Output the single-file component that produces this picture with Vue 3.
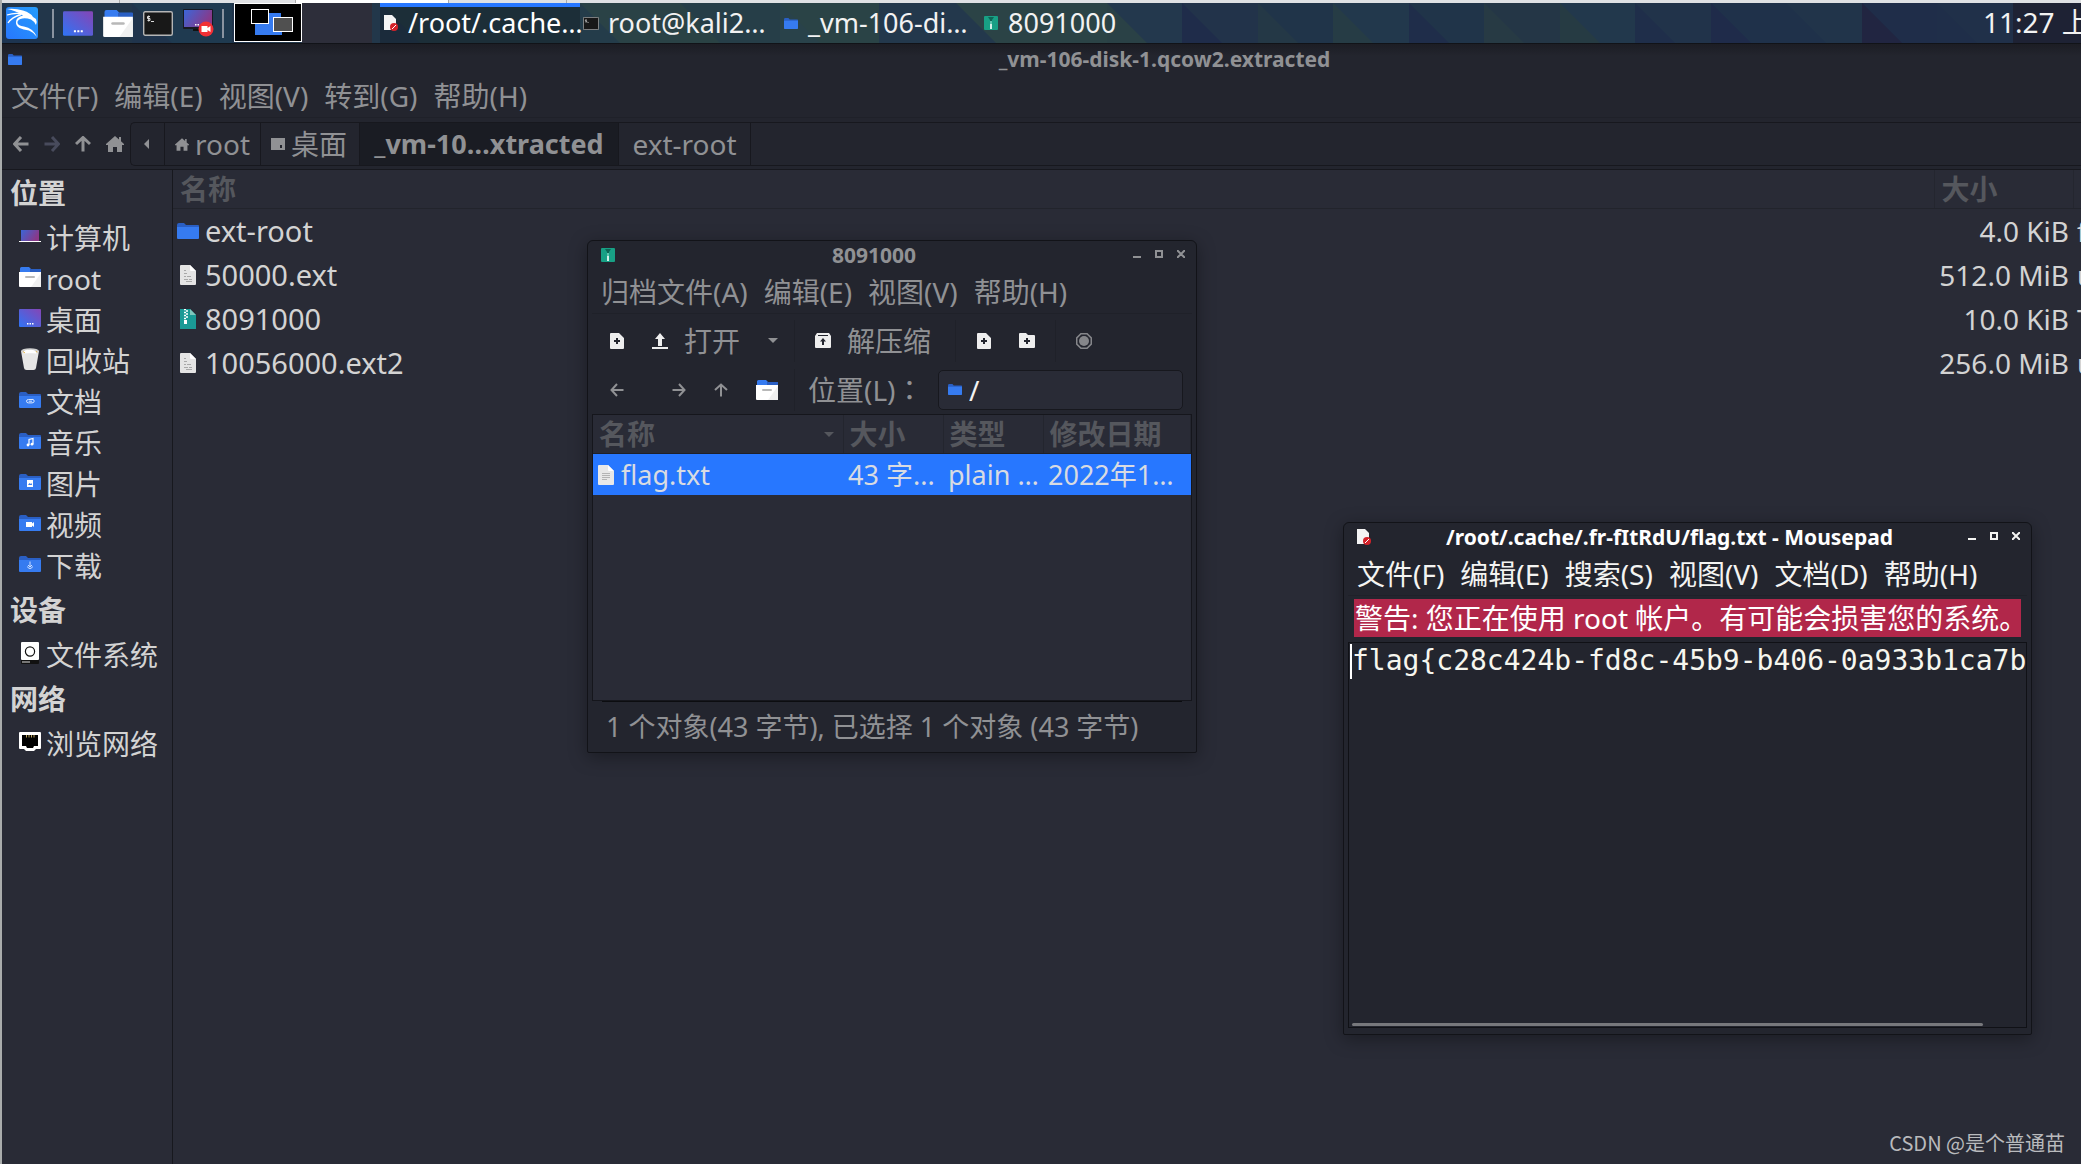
<script setup>
const tasks = [
  { icon: 'i-note-locked', w: 14, h: 16, label: '/root/.cache…', active: true },
  { icon: 'i-term', w: 16, h: 13, label: 'root@kali2…' },
  { icon: 'i-folder', w: 14, h: 11, label: '_vm-106-di…' },
  { icon: 'i-archive', w: 14, h: 14, label: '8091000' },
]

const menus = ['文件(F)', '编辑(E)', '视图(V)', '转到(G)', '帮助(H)']
const archiveMenus = ['归档文件(A)', '编辑(E)', '视图(V)', '帮助(H)']
const padMenus = ['文件(F)', '编辑(E)', '搜索(S)', '视图(V)', '文档(D)', '帮助(H)']

const places = [
  {
    title: '位置',
    items: [
      { icon: 'i-laptop', label: '计算机' },
      { icon: 'i-home-folder', label: 'root' },
      { icon: 'i-desktop', label: '桌面' },
      { icon: 'i-trash', label: '回收站' },
      { icon: 'i-f-doc', label: '文档' },
      { icon: 'i-f-music', label: '音乐' },
      { icon: 'i-f-pic', label: '图片' },
      { icon: 'i-f-video', label: '视频' },
      { icon: 'i-f-down', label: '下载' },
    ],
  },
  { title: '设备', items: [{ icon: 'i-disk', label: '文件系统' }] },
  { title: '网络', items: [{ icon: 'i-net', label: '浏览网络' }] },
]

const files = [
  { icon: 'i-folder', name: 'ext-root', size: '4.0 KiB', type: 'f' },
  { icon: 'i-bin', name: '50000.ext', size: '512.0 MiB', type: 'u' },
  { icon: 'i-zip', name: '8091000', size: '10.0 KiB', type: 'T' },
  { icon: 'i-bin', name: '10056000.ext2', size: '256.0 MiB', type: 'u' },
]

const facets = [
  { x: 2, w: 130, a: '#1d3450', b: '#22364a' },
  { x: 132, w: 100, a: '#20344c', b: '#1f3a50' },
  { x: 232, w: 148, a: '#1e3249', b: '#22374a' },
  { x: 380, w: 200, a: '#1b2b3b', b: '#1c2e38' },
  { x: 580, w: 100, a: '#243c4a', b: '#2a4246' },
  { x: 680, w: 100, a: '#2a4244', b: '#263e48' },
  { x: 780, w: 99, a: '#29424a', b: '#2a4346' },
  { x: 879, w: 77, a: '#23384c', b: '#23384c' },
  { x: 956, w: 151, a: '#23384c', b: '#2b4346' },
  { x: 1107, w: 75, a: '#2a4146', b: '#23384d' },
  { x: 1182, w: 76, a: '#1f2c4a', b: '#22334a' },
  { x: 1258, w: 75, a: '#243846', b: '#203449' },
  { x: 1333, w: 76, a: '#263c45', b: '#22384c' },
  { x: 1409, w: 75, a: '#1f2d4a', b: '#203449' },
  { x: 1484, w: 76, a: '#273a44', b: '#243646' },
  { x: 1560, w: 75, a: '#263b43', b: '#22384c' },
  { x: 1635, w: 76, a: '#1f2e4a', b: '#21334a' },
  { x: 1711, w: 75, a: '#1f2b4a', b: '#1f314a' },
  { x: 1786, w: 76, a: '#1f314a', b: '#21344a' },
  { x: 1862, w: 75, a: '#212541', b: '#1f2d49' },
  { x: 1937, w: 76, a: '#1f2e49', b: '#203049' },
  { x: 2013, w: 80, a: '#1e2234', b: '#1e2234' },
]

const flag = 'flag{c28c424b-fd8c-45b9-b406-0a933b1ca7b'
</script>

<template>
  <svg class="defs" aria-hidden="true">
    <defs>
      <linearGradient id="g-screen" x1="0" y1="1" x2="1" y2="0">
        <stop offset="0" stop-color="#2f74f5" /><stop offset="1" stop-color="#8645b5" />
      </linearGradient>
      <linearGradient id="g-laptop" x1="0" y1="0" x2="1" y2="0.4">
        <stop offset="0" stop-color="#3b66d8" /><stop offset="1" stop-color="#8a3888" />
      </linearGradient>
      <linearGradient id="g-kali" x1="0" y1="1" x2="1" y2="0">
        <stop offset="0" stop-color="#2777ff" /><stop offset="1" stop-color="#259cfb" />
      </linearGradient>
    </defs>
    <symbol id="i-folder" viewBox="0 0 22 16" preserveAspectRatio="none">
      <path d="M0 2q0-2 2-2h5l2 2h12q1 0 1 1v4H0z" fill="#2a5fc4" />
      <path d="M0 4h22v11q0 1-1 1H1q-1 0-1-1z" fill="#367bf0" />
    </symbol>
    <symbol id="i-home-folder" viewBox="0 0 22 20">
      <path d="M1 1.500q0-1.500 1.500-1.500H10l2 2h9q1 0 1 1v4H1z" fill="#367bf0" />
      <path d="M11 2h11v4H11z" fill="#2a5fc4" />
      <path d="M0 5h22v14q0 1-1 1H1q-1 0-1-1z" fill="#fff" />
      <path d="M22 6v14H12z" fill="#f0f0f0" />
      <rect x="6" y="9" width="10" height="2" rx="1" fill="#b8b8b8" />
    </symbol>
    <symbol id="i-desktop" viewBox="0 0 22 18">
      <rect width="22" height="18" rx="1" fill="url(#g-screen)" />
      <path d="M8 14h1.500v1.500H8zM10.500 14H12v1.500h-1.500zM13 14h1.500v1.500H13z" fill="#fff" />
    </symbol>
    <symbol id="i-laptop" viewBox="0 0 22 12">
      <rect x="2" width="18" height="11" fill="url(#g-laptop)" />
      <rect y="11" width="22" height="1" fill="#fff" />
    </symbol>
    <symbol id="i-trash" viewBox="0 0 22 22">
      <path d="M2 3l3 17q.3 2 2.500 2h7q2.200 0 2.500-2l3-17z" fill="#e6e6e6" />
      <ellipse cx="11" cy="3" rx="9" ry="2.800" fill="#d0d0d0" />
      <path d="M4 4q3-3 6-2 4-1 8 2l-1 1.500H5z" fill="#fff" />
      <path d="M4 3.500l2 1.500M17 3l1 1.500" stroke="#e3b64c" />
    </symbol>
    <symbol id="i-f-doc" viewBox="0 0 22 16">
      <use href="#i-folder" width="22" height="16" />
      <path d="M14 7.500H9.500q-2 0-2 1.700t2 1.700h3.500q2.200 0 2.200-1.800T13 7.300M13 9.200H9.700" stroke="#dbe8ff" fill="none" />
    </symbol>
    <symbol id="i-f-music" viewBox="0 0 22 16">
      <use href="#i-folder" width="22" height="16" />
      <path d="M10 12V6.500l4-1V11" stroke="#fff" fill="none" stroke-width="1.200" />
      <circle cx="9" cy="12" r="1.400" fill="#fff" /><circle cx="13" cy="11.200" r="1.400" fill="#fff" />
    </symbol>
    <symbol id="i-f-pic" viewBox="0 0 22 16">
      <use href="#i-folder" width="22" height="16" />
      <rect x="8" y="6" width="6" height="7" fill="#fff" />
      <path d="M9 11l1.500-2 1 1 .8-1 .9 2z" fill="#367bf0" />
    </symbol>
    <symbol id="i-f-video" viewBox="0 0 22 16">
      <use href="#i-folder" width="22" height="16" />
      <path d="M7 7h6v1.500l2-1.500v5l-2-1.500V12H7z" fill="#fff" />
    </symbol>
    <symbol id="i-f-down" viewBox="0 0 22 16">
      <use href="#i-folder" width="22" height="16" />
      <path d="M11 5.500v5M9 9l2 2 2-2M8.500 10.500q.5 2 2.500 2t2.500-2" stroke="#cfe0ff" fill="none" />
    </symbol>
    <symbol id="i-disk" viewBox="0 0 22 22">
      <rect x="2" width="18" height="22" rx="1" fill="#111" />
      <rect x="2" width="18" height="18" rx="1" fill="#fff" />
      <circle cx="11" cy="9.500" r="4.600" stroke="#111" stroke-width="1.200" fill="#fff" />
      <path d="M3 20h8" stroke="#ddd" />
    </symbol>
    <symbol id="i-net" viewBox="0 0 22 20">
      <path d="M1 0h20q1 0 1 1v15q0 1-1 1h-4l-2 2H7l-2-2H1q-1 0-1-1V1q0-1 1-1z" fill="#fff" />
      <path d="M3 3h16v11h-4l-1 2H8l-1-2H3z" fill="#000" />
      <path d="M7.500 3v2.500M10 3v2.500M12.500 3v2.500M15 3v2.500" stroke="#b9a15a" />
    </symbol>
    <symbol id="i-bin" viewBox="0 0 16 20">
      <path d="M1 0h9l6 6v13q0 1-1 1H1q-1 0-1-1V1q0-1 1-1z" fill="#e4e4e4" />
      <path d="M10 0l6 6h-5q-1 0-1-1z" fill="#fff" />
      <path d="M4 5.500h2M4 8.500h3M4 11.500h2M7 11.500h4M4 14.500h4M9 14.500h3M6 16.500h6" stroke="#a8a8a8" stroke-width="1" />
    </symbol>
    <symbol id="i-text" viewBox="0 0 16 20">
      <path d="M1 0h9l6 6v13q0 1-1 1H1q-1 0-1-1V1q0-1 1-1z" fill="#e8e8e8" />
      <path d="M10 0l6 6h-5q-1 0-1-1z" fill="#fff" />
      <path d="M4 8.500h8M4 10.500h8M4 12.500h8M4 14.500h5" stroke="#b4b4b4" />
    </symbol>
    <symbol id="i-zip" viewBox="0 0 16 20">
      <path d="M0 0h10l6 6v14H0z" fill="#1a9a96" />
      <path d="M10 0l6 6h-6z" fill="#7fc7bd" />
      <path d="M4 .5h2M6 2h2M4 3.500h2M6 5h2M4 6.500h2M6 8h2M4 9.500h2" stroke="#fff" stroke-width="1.500" />
      <rect x="4" y="11" width="3" height="4" fill="#fff" />
    </symbol>
    <symbol id="i-archive" viewBox="0 0 14 14">
      <rect width="14" height="14" rx="1" fill="#18a085" />
      <path d="M4 1h6L8 4v2H6V4z" fill="#0d6656" />
      <rect x="6" y="5" width="2" height="3" fill="#5fc4ae" />
      <rect x="6" y="8" width="2" height="5" fill="#d3efe8" />
    </symbol>
    <symbol id="i-term" viewBox="0 0 30 25" preserveAspectRatio="none">
      <rect x=".7" y=".7" width="28.600" height="23.600" rx="1.500" fill="#181818" stroke="#b5b5b5" stroke-width="1.400" />
      <path d="M7 5.500H4.500v2H7v2H4.500M5.700 4.500v6M8 10.500h3" stroke="#ddd" fill="none" />
    </symbol>
    <symbol id="i-note-locked" viewBox="0 0 14 16">
      <path d="M0 0h8l4 4v11H0z" fill="#f4f4f4" />
      <circle cx="10" cy="12" r="4" fill="#d3222a" />
      <path d="M8 14l4-4" stroke="#fff" />
    </symbol>
    <symbol id="i-record" viewBox="0 0 31 28">
      <path d="M10 20h10v2H10z" fill="#111" />
      <rect width="30" height="20" rx="1" fill="#181a22" />
      <rect x="1" y="1" width="28" height="17" fill="url(#g-laptop)" />
      <path d="M12 15h1.500v1.500H12zM14.500 15H16v1.500h-1.500z" fill="#fff" />
      <circle cx="23" cy="20" r="7.500" fill="#f22f35" />
      <path d="M18.500 17h6v2l3-2v6l-3-2v2h-6z" fill="#fff" />
    </symbol>
    <symbol id="i-kali" viewBox="0 0 32 32">
      <rect width="32" height="32" rx="3" fill="url(#g-kali)" />
      <path d="M1 2Q9 1 17 3.500T27 10l3 2q1.500 3 0 6-2-4-5-5.500-6-2-10.500-.5-3.500 1.500-3 4 .5 2.500 6.500 3.500 9 1.500 13 10.500-4-5-8-6.500-6-1-9.500-2.500-4-2.500-3.500-6Q10 10 17 8.500 10 3.500 1 2z" fill="#fff" />
      <path d="M1 8q8-2.500 15-1M2 16q4-6 13-8.500" stroke="#fff" stroke-width="1.300" fill="none" />
    </symbol>
    <symbol id="i-left" viewBox="0 0 16 16">
      <path d="M8 1L1.500 8 8 15M2 8h13.500" stroke="currentColor" stroke-width="3" fill="none" />
    </symbol>
    <symbol id="i-right" viewBox="0 0 16 16">
      <path d="M8 1l6.500 7L8 15M14 8H.5" stroke="currentColor" stroke-width="3" fill="none" />
    </symbol>
    <symbol id="i-up" viewBox="0 0 16 16">
      <path d="M1 8l7-6.500L15 8M8 2v13.500" stroke="currentColor" stroke-width="3" fill="none" />
    </symbol>
    <symbol id="i-left-s" viewBox="0 0 14 14">
      <path d="M7 1L1.500 7 7 13M2 7h11.500" stroke="currentColor" stroke-width="2" fill="none" />
    </symbol>
    <symbol id="i-right-s" viewBox="0 0 14 14">
      <path d="M7 1l5.500 6L7 13M12 7H.5" stroke="currentColor" stroke-width="2" fill="none" />
    </symbol>
    <symbol id="i-up-s" viewBox="0 0 14 14">
      <path d="M1 7l6-5.500L13 7M7 2v11.500" stroke="currentColor" stroke-width="2" fill="none" />
    </symbol>
    <symbol id="i-home" viewBox="0 0 18 16">
      <path d="M9 0l4 3.500V1h2v4.300L18 8v1h-2v7h-5v-5H7v5H2V9H0V8z" fill="currentColor" />
    </symbol>
    <symbol id="i-desk-small" viewBox="0 0 14 12">
      <path d="M0 0h14v12H0zM9 7v3h2V7z" fill="currentColor" fill-rule="evenodd" />
    </symbol>
    <symbol id="i-new" viewBox="0 0 14 16">
      <path d="M1 0h8l5 5v10q0 1-1 1H1q-1 0-1-1V1q0-1 1-1zM6 5v2H4v2h2v2h2V9h2V7H8V5z" fill="#eee" fill-rule="evenodd" />
    </symbol>
    <symbol id="i-new-folder" viewBox="0 0 16 15">
      <path d="M1 0h6l2 2h6q1 0 1 1v11q0 1-1 1H1q-1 0-1-1V1q0-1 1-1zM7 5v2H5v2h2v2h2V9h2V7H9V5z" fill="#eee" fill-rule="evenodd" />
    </symbol>
    <symbol id="i-open" viewBox="0 0 16 16">
      <path d="M8 0l5 6h-3v7H6V6H3zM0 14h16v2H0z" fill="#eee" />
    </symbol>
    <symbol id="i-extract" viewBox="0 0 16 15">
      <path d="M2 0h12l2 3v11q0 1-1 1H1q-1 0-1-1V3zM3 2v1h10V2zM8 5L5 8.500h2V12h2V8.500h2z" fill="#eee" fill-rule="evenodd" />
    </symbol>
    <symbol id="i-stop" viewBox="0 0 16 16">
      <path d="M5 .7h6L15.300 5v6L11 15.300H5L.7 11V5z" fill="#23252e" stroke="#85868a" stroke-width="1.600" />
      <circle cx="8" cy="8" r="5" fill="#85868a" />
    </symbol>
    <symbol id="i-caret" viewBox="0 0 10 5"><path d="M0 0h10L5 5z" fill="currentColor" /></symbol>
    <symbol id="i-min" viewBox="0 0 8 8"><path d="M0 6h8v2H0z" fill="currentColor" /></symbol>
    <symbol id="i-max" viewBox="0 0 8 8"><path d="M1 1h6v6H1z" fill="none" stroke="currentColor" stroke-width="2" /></symbol>
    <symbol id="i-close" viewBox="0 0 8 8"><path d="M0 0l8 8M8 0L0 8" stroke="currentColor" stroke-width="2" /></symbol>
  </svg>

  <div class="screen">
    <div class="tabstrip"><i></i><i></i><i class="lit"></i><i></i></div>

    <header class="panel">
      <svg class="facets" aria-hidden="true">
        <g v-for="f in facets" :key="f.x">
          <rect :x="f.x" y="0" :width="f.w" height="40" :fill="f.b" />
          <polygon :points="`${f.x},0 ${f.x + 40},40 ${f.x},40`" :fill="f.a" />
        </g>
      </svg>
      <div class="launchers">
        <button class="plain" aria-label="Kali"><svg width="32" height="32"><use href="#i-kali" /></svg></button>
        <span class="bar"></span>
        <button class="plain" aria-label="Desktop"><svg width="30" height="25"><use href="#i-desktop" /></svg></button>
        <button class="plain" aria-label="Home"><svg width="30" height="27"><use href="#i-home-folder" /></svg></button>
        <button class="plain" aria-label="Terminal"><svg width="30" height="25"><use href="#i-term" /></svg></button>
        <button class="plain rec" aria-label="Recorder"><svg width="31" height="28"><use href="#i-record" /></svg></button>
        <span class="bar"></span>
      </div>
      <div class="pager">
        <button class="plain ws" aria-label="Workspace 1">
          <svg width="66" height="37" viewBox="0 0 66 37">
            <path d="M20 12h14V9h12v4h1v18H20z" fill="#367bf0" />
            <rect x="16.500" y="5.500" width="17" height="14" fill="#000" stroke="#fff" />
            <rect x="38.500" y="13.500" width="19" height="14" fill="#505050" stroke="#fff" />
          </svg>
        </button>
        <button class="plain ws idle" aria-label="Workspace 2"></button>
      </div>
      <nav class="tasks">
        <button v-for="t in tasks" :key="t.label" class="plain task" :class="{ active: t.active }">
          <span class="ticon"><svg :width="t.w" :height="t.h"><use :href="'#' + t.icon" /></svg></span>
          <span>{{ t.label }}</span>
        </button>
      </nav>
      <time class="clock">11:27 上</time>
    </header>

    <main class="fm">
      <div class="fm-title">
        <svg width="14" height="11"><use href="#i-folder" /></svg>
        <h1>_vm-106-disk-1.qcow2.extracted</h1>
      </div>
      <nav class="menu">
        <button v-for="m in menus" :key="m" class="plain">{{ m }}</button>
      </nav>
      <div class="nav">
        <div class="arrows">
          <button class="plain" aria-label="Back"><svg width="16" height="16"><use href="#i-left" /></svg></button>
          <button class="plain dim" aria-label="Forward"><svg width="16" height="16"><use href="#i-right" /></svg></button>
          <button class="plain" aria-label="Up"><svg width="16" height="16"><use href="#i-up" /></svg></button>
          <button class="plain" aria-label="Home"><svg width="18" height="16"><use href="#i-home" /></svg></button>
        </div>
        <div class="path">
          <button class="plain crumb c-arrow" aria-label="Scroll"><svg width="5" height="10" viewBox="0 0 5 10"><path d="M5 0v10L0 5z" fill="currentColor" /></svg></button>
          <button class="plain crumb c-root"><svg width="14" height="13"><use href="#i-home" /></svg>root</button>
          <button class="plain crumb c-desk"><svg width="14" height="12"><use href="#i-desk-small" /></svg>桌面</button>
          <button class="plain crumb c-here">_vm-10…xtracted</button>
          <button class="plain crumb c-ext">ext-root</button>
        </div>
      </div>

      <div class="body">
        <aside class="side">
          <section v-for="g in places" :key="g.title">
            <h2>{{ g.title }}</h2>
            <a v-for="p in g.items" :key="p.label" href="#">
              <svg width="22" height="22"><use :href="'#' + p.icon" /></svg>{{ p.label }}
            </a>
          </section>
        </aside>
        <div class="files">
          <table>
            <colgroup><col /><col class="col-size" /><col class="col-type" /></colgroup>
            <thead>
              <tr><th>名称</th><th>大小</th><th></th></tr>
            </thead>
            <tbody>
              <tr v-for="f in files" :key="f.name">
                <td><span class="fname"><span class="ficon"><svg :width="f.icon === 'i-folder' ? 22 : 16" :height="f.icon === 'i-folder' ? 16 : 20"><use :href="'#' + f.icon" /></svg></span>{{ f.name }}</span></td>
                <td>{{ f.size }}</td>
                <td>{{ f.type }}</td>
              </tr>
            </tbody>
          </table>
        </div>
      </div>
    </main>

    <section class="win archive">
      <div class="win-title">
        <svg width="14" height="14"><use href="#i-archive" /></svg>
        <h2>8091000</h2>
        <div class="ctl">
          <button class="plain" aria-label="Minimize"><svg width="8" height="8"><use href="#i-min" /></svg></button>
          <button class="plain" aria-label="Maximize"><svg width="8" height="8"><use href="#i-max" /></svg></button>
          <button class="plain" aria-label="Close"><svg width="8" height="8"><use href="#i-close" /></svg></button>
        </div>
      </div>
      <nav class="menu">
        <button v-for="m in archiveMenus" :key="m" class="plain">{{ m }}</button>
      </nav>
      <div class="tools first">
        <div class="tgroup">
          <button class="plain" aria-label="New"><svg width="14" height="16"><use href="#i-new" /></svg></button>
          <button class="plain open"><svg width="16" height="16"><use href="#i-open" /></svg>打开</button>
          <button class="plain" aria-label="Recent"><svg width="10" height="5"><use href="#i-caret" /></svg></button>
        </div>
        <div class="tgroup t-extract">
          <button class="plain open"><svg width="16" height="15"><use href="#i-extract" /></svg>解压缩</button>
        </div>
        <div class="tgroup t-add">
          <button class="plain" aria-label="Add files"><svg width="14" height="16"><use href="#i-new" /></svg></button>
          <button class="plain" aria-label="Add folder"><svg width="16" height="15"><use href="#i-new-folder" /></svg></button>
        </div>
        <div class="tgroup t-stop">
          <button class="plain" aria-label="Stop"><svg width="16" height="16"><use href="#i-stop" /></svg></button>
        </div>
      </div>
      <div class="tools second">
        <div class="tgroup t-nav">
          <button class="plain" aria-label="Back"><svg width="14" height="14"><use href="#i-left-s" /></svg></button>
          <button class="plain fwd" aria-label="Forward"><svg width="14" height="14"><use href="#i-right-s" /></svg></button>
          <button class="plain" aria-label="Up"><svg width="14" height="14"><use href="#i-up-s" /></svg></button>
          <button class="plain" aria-label="Home"><svg width="22" height="20"><use href="#i-home-folder" /></svg></button>
        </div>
        <div class="tgroup t-loc">
          <label for="loc">位置(L)：</label>
          <div class="loc">
            <svg width="14" height="11"><use href="#i-folder" /></svg>
            <input id="loc" type="text" value="/" />
          </div>
        </div>
      </div>
      <div class="list">
        <table>
          <colgroup><col class="a-name" /><col class="a-mid" /><col class="a-mid" /><col /></colgroup>
          <thead>
            <tr>
              <th><span class="sort">名称<svg width="10" height="5"><use href="#i-caret" /></svg></span></th>
              <th>大小</th><th>类型</th><th>修改日期</th>
            </tr>
          </thead>
          <tbody>
            <tr>
              <td><span class="entry"><svg width="16" height="20"><use href="#i-text" /></svg>flag.txt</span></td>
              <td>43 字...</td><td>plain …</td><td>2022年1…</td>
            </tr>
          </tbody>
        </table>
      </div>
      <p class="status">1 个对象(43 字节), 已选择 1 个对象 (43 字节)</p>
    </section>

    <section class="win pad">
      <div class="win-title">
        <svg width="14" height="16"><use href="#i-note-locked" /></svg>
        <h2>/root/.cache/.fr-fItRdU/flag.txt - Mousepad</h2>
        <div class="ctl">
          <button class="plain" aria-label="Minimize"><svg width="8" height="8"><use href="#i-min" /></svg></button>
          <button class="plain" aria-label="Maximize"><svg width="8" height="8"><use href="#i-max" /></svg></button>
          <button class="plain" aria-label="Close"><svg width="8" height="8"><use href="#i-close" /></svg></button>
        </div>
      </div>
      <nav class="menu">
        <button v-for="m in padMenus" :key="m" class="plain">{{ m }}</button>
      </nav>
      <p class="warn">警告: 您正在使用 root 帐户。有可能会损害您的系统。</p>
      <div class="editor">
        <span class="caret"></span>
        <textarea aria-label="flag.txt" wrap="off" spellcheck="false" :value="flag"></textarea>
        <div class="hscroll"></div>
      </div>
    </section>

    <div class="mark">CSDN @是个普通苗</div>
  </div>
</template>

<style>
body {
  background: #292b36;
}
</style>

<style scoped>
.defs {
  position: absolute;
  width: 0;
  height: 0;
}
.screen {
  position: relative;
  display: flex;
  flex-direction: column;
  box-sizing: border-box;
  min-height: 100vh;
  overflow: hidden;
  border-left: 2px solid #a9acac;
  background: #292b36;
  color: #d3d3d3;
  font: 28px/40px 'Noto Sans', 'Noto Sans CJK SC', sans-serif;
}
.screen svg {
  display: block;
  flex: none;
}
h1, h2, p {
  margin: 0;
}
.plain {
  display: flex;
  align-items: center;
  margin: 0;
  padding: 0;
  border: 0;
  background: none;
  color: inherit;
  font: inherit;
  white-space: nowrap;
}

/* strip of the host window above the guest screen */
.tabstrip {
  display: flex;
  height: 3px;
  background: #dfe1e4;
}
.tabstrip i {
  box-sizing: border-box;
  width: 118px;
  border-right: 1px solid #aaa;
}
.tabstrip i:nth-child(2) {
  width: 176px;
}
.tabstrip .lit {
  width: 153px;
  background: #fff;
}

.panel {
  position: relative;
  display: flex;
  height: 40px;
  border-bottom: 1px solid #111318;
  color: #f2f2f2;
}
.panel > * {
  position: relative;
}
.panel > .facets {
  position: absolute;
  left: -2px;
  top: 0;
  width: calc(100% + 2px);
  height: 40px;
}
.launchers {
  display: flex;
  align-items: center;
  gap: 10px;
  width: 228px;
  padding-left: 4px;
}
.bar {
  width: 2px;
  height: 29px;
  margin: 0 -1px 0 4px;
  background: #8a93a0;
}
.rec {
  margin-right: -6px;
}
.pager {
  display: flex;
  width: 146px;
}
.ws {
  box-sizing: border-box;
  width: 68px;
  height: 39px;
  border: 1px solid #fff;
  background: #000;
}
.ws.idle {
  width: 70px;
  height: 40px;
  border: 0;
  background: #2d2e3a;
}
.tasks {
  display: flex;
  flex: 1;
}
.task {
  box-sizing: border-box;
  width: 200px;
  padding-bottom: 4px;
  border-top: 4px solid transparent;
  font-size: 27px;
  line-height: 32px;
}
.task.active {
  border-top-color: #2777ff;
  color: #fff;
}
.ticon {
  display: flex;
  flex: none;
  justify-content: center;
  width: 22px;
  padding-right: 6px;
}
.clock {
  width: 98px;
  overflow: hidden;
  line-height: 38px;
  white-space: nowrap;
}

.fm {
  display: flex;
  flex: 1;
  flex-direction: column;
  background: #23252e;
  color: #909194;
}
.fm-title {
  display: flex;
  align-items: center;
  box-sizing: border-box;
  height: 31px;
  padding-left: 6px;
  background: linear-gradient(#1c1d24, #23252e 12px);
}
.fm-title h1 {
  flex: 1;
  padding-left: 226px;
  font-size: 21px;
  line-height: 29px;
  text-align: center;
}
.menu {
  display: flex;
  gap: 16px;
  height: 42px;
  padding-left: 9px;
  border-bottom: 1px solid #1f2129;
}
.nav {
  display: flex;
  margin: 4px 0 3px;
}
.arrows {
  display: flex;
  align-items: center;
  gap: 15px;
  box-sizing: border-box;
  width: 128px;
  padding-left: 11px;
}
.arrows .dim {
  color: #484b5c;
}
.path {
  display: flex;
  flex: 1;
  box-sizing: border-box;
  height: 44px;
  border: 1px solid #17181e;
  border-right: 0;
  border-radius: 5px 0 0 5px;
}
.crumb {
  box-sizing: border-box;
  border-right: 1px solid #17181e;
}
.crumb svg {
  margin-right: 6px;
}
.c-arrow {
  width: 34px;
  padding-left: 13px;
}
.c-root {
  width: 96px;
  padding-left: 10px;
}
.c-desk {
  width: 99px;
  padding-left: 10px;
}
.c-here {
  width: 259px;
  justify-content: center;
  background: #1a1c23;
  font-size: 27px;
  font-weight: 700;
}
.c-ext {
  width: 132px;
  justify-content: center;
}
.body {
  display: flex;
  flex: 1;
  border-top: 1px solid #17181e;
  background: #292b36;
  color: #d3d3d3;
}
.side {
  flex: none;
  box-sizing: border-box;
  width: 171px;
  border-right: 1px solid #17181e;
}
.side h2 {
  padding: 0 0 2px 8px;
  font-size: 28px;
  line-height: 46px;
}
.side a {
  display: flex;
  align-items: center;
  gap: 5px;
  box-sizing: border-box;
  height: 41px;
  padding: 0 0 2px 17px;
  color: inherit;
  text-decoration: none;
}
.side a svg {
  margin-bottom: 4px;
}
table {
  width: 100%;
  border-collapse: collapse;
  table-layout: fixed;
}
th,
td {
  padding: 0;
  overflow: hidden;
  font-weight: 400;
  text-align: left;
  white-space: nowrap;
}
th {
  color: #55575d;
  font-weight: 700;
}
.files {
  flex: 1;
  min-width: 0;
}
.col-size {
  width: 139px;
}
.col-type {
  width: 8px;
}
.files th {
  height: 38px;
  padding-left: 7px;
  border-right: 1px solid #24262f;
  border-bottom: 1px solid #22242c;
  line-height: 38px;
}
.files td {
  height: 43px;
  padding-bottom: 1px;
}
.files td:nth-child(2) {
  padding-right: 4px;
  text-align: right;
}
.files th:last-child,
.files td:last-child {
  padding-left: 4px;
  border-right: 0;
}
.fname {
  display: flex;
  align-items: center;
  font-size: 29px;
}
.ficon {
  display: flex;
  justify-content: center;
  width: 22px;
  padding: 0 6px 0 4px;
}

.win {
  position: absolute;
  display: flex;
  flex-direction: column;
  box-sizing: border-box;
  border: 1px solid #121318;
  border-radius: 6px 6px 2px 2px;
  background: #23252e;
  box-shadow: 0 4px 18px rgba(0, 0, 0, 0.35);
}
.win .menu {
  height: 43px;
  margin: 0 4px;
}
.win-title {
  display: flex;
  align-items: center;
  box-sizing: border-box;
  height: 29px;
  padding: 0 11px 1px 13px;
}
.win-title h2 {
  flex: 1;
  font-size: 21px;
  line-height: 28px;
  text-align: center;
}
.ctl {
  display: flex;
  gap: 14px;
  padding-bottom: 2px;
}
.archive {
  left: 585px;
  top: 240px;
  width: 610px;
  height: 513px;
  color: #909194;
}
.tools {
  display: flex;
  align-items: center;
  height: 49px;
  margin: 0 4px;
}
.tools.first {
  padding-top: 2px;
}
.tgroup {
  display: flex;
  flex: none;
  align-items: center;
  box-sizing: border-box;
  height: 42px;
}
.tgroup + .tgroup {
  border-left: 1px solid #1f2129;
}
.tools.first .tgroup:first-child,
.t-nav {
  width: 202px;
  padding-left: 18px;
  gap: 28px;
}
.tgroup .open svg {
  margin-right: 16px;
}
.t-extract {
  width: 161px;
  padding-left: 20px;
}
.t-add {
  width: 100px;
  padding-left: 21px;
  gap: 28px;
}
.t-stop {
  padding-left: 20px;
}
.t-nav .fwd {
  margin-left: 20px;
}
.t-loc {
  flex: 1;
  min-width: 0;
  padding: 0 9px 0 13px;
}
.t-loc label {
  flex: none;
  width: 130px;
  font-family: 'Noto Sans', 'Noto Sans CJK TC', sans-serif;
  white-space: nowrap;
}
.loc {
  display: flex;
  flex: 1;
  align-items: center;
  gap: 7px;
  box-sizing: border-box;
  min-width: 0;
  height: 40px;
  padding-left: 9px;
  border: 1px solid #17181e;
  border-radius: 5px;
  background: #292b36;
}
.loc input {
  flex: 1;
  min-width: 0;
  padding: 0;
  border: 0;
  outline: 0;
  background: none;
  color: #f2f2f2;
  font: inherit;
}
.list {
  flex: 1;
  margin: 0 4px;
  border: 1px solid #15161c;
  background: #292b36;
}
.a-name {
  width: 250px;
}
.a-mid {
  width: 100px;
}
.list th {
  height: 38px;
  padding-left: 6px;
  border-right: 1px solid #23252e;
  border-bottom: 1px solid #1e2028;
  line-height: 38px;
}
.sort {
  display: flex;
  align-items: center;
  justify-content: space-between;
  padding-right: 9px;
}
.list tbody {
  background: #2777ff;
}
.list td {
  height: 41px;
  padding-left: 5px;
  color: #d8dbe2;
  font-size: 27px;
}
.entry {
  display: flex;
  align-items: center;
  gap: 7px;
}
.status {
  margin: 0 14px;
  padding: 4px 0 5px 4px;
  border-top: 1px solid #0c0d10;
  font-size: 27px;
  line-height: 41px;
}

.pad {
  left: 1341px;
  top: 522px;
  width: 689px;
  height: 513px;
  color: #f4f4f2;
}
.pad .win-title h2 {
  color: #fff;
}
.warn {
  margin: 3px 10px 5px;
  padding-left: 1px;
  background: #b1274a;
  color: #fff;
  line-height: 38px;
  white-space: nowrap;
}
.editor {
  position: relative;
  display: flex;
  flex: 1;
  flex-direction: column;
  margin: 0 4px 6px;
  border: 1px solid #101116;
}
.caret {
  position: absolute;
  left: 1px;
  top: 1px;
  width: 2px;
  height: 35px;
  background: #fff;
}
.editor textarea {
  flex: 1;
  margin: 0;
  padding: 0 0 0 3px;
  border: 0;
  outline: 0;
  overflow: hidden;
  resize: none;
  background: none;
  color: #f6f6ee;
  font: 28px/35px 'DejaVu Sans Mono', 'Noto Sans CJK SC', monospace;
}
.hscroll {
  width: 631px;
  height: 3px;
  margin: 0 0 1px 3px;
  border-radius: 2px;
  background: #77787c;
}

.mark {
  position: absolute;
  right: 16px;
  bottom: 6px;
  color: #b9babd;
  font: 20px/30px 'Noto Sans CJK SC', sans-serif;
}
</style>
